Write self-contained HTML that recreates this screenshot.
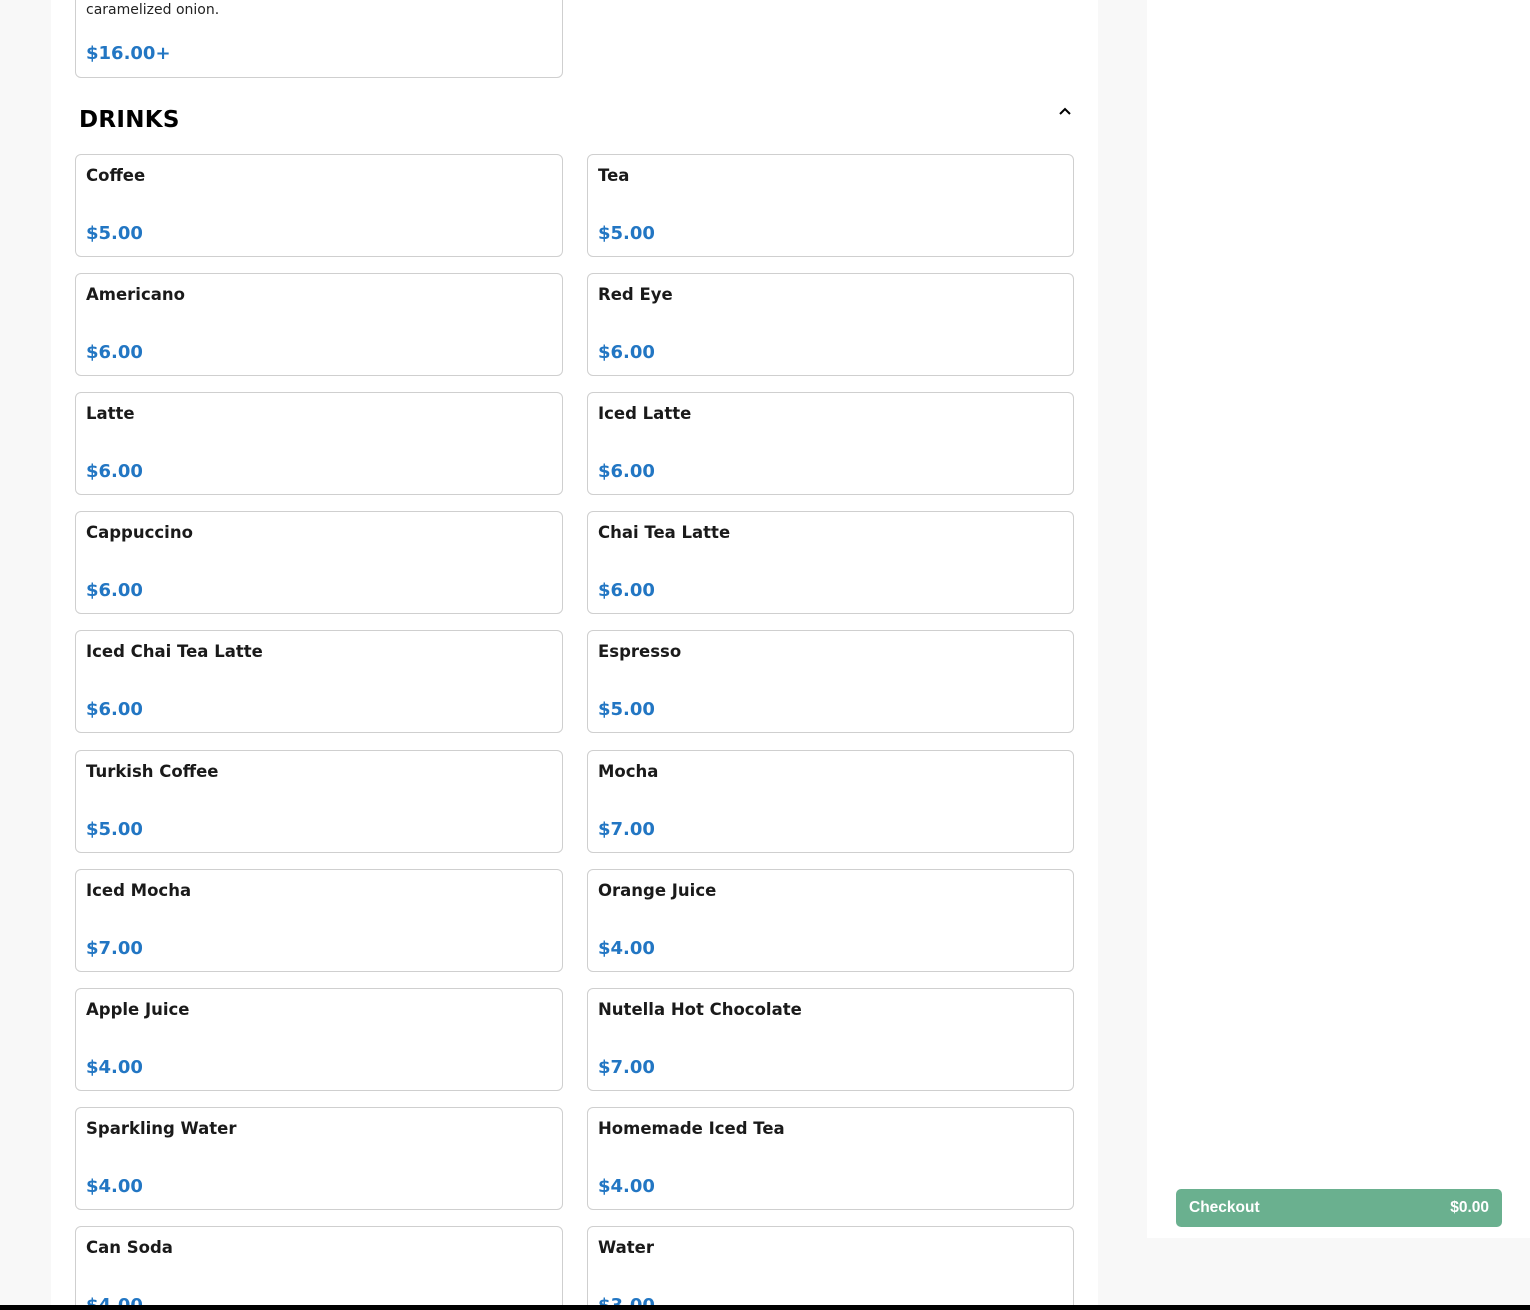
<!DOCTYPE html>
<html><head><meta charset="utf-8"><style>
*{box-sizing:border-box;margin:0;padding:0}
html,body{width:1530px;height:1310px;overflow:hidden}
body{background:#f8f8f8;position:relative;font-family:"DejaVu Sans","Liberation Sans",sans-serif;}
.main{position:absolute;left:51px;top:0;width:1047px;height:1310px;background:#fff}
.side{position:absolute;left:1147px;top:0;width:383px;height:1238px;background:#fff}
.card{position:absolute;width:488px;height:103px;border:1px solid #cfcfcf;border-radius:6px;background:#fff}
.n{position:absolute;left:10px;top:11px;font-size:16.5px;font-weight:bold;color:#1a1a1a;line-height:20px;white-space:nowrap}
.p{position:absolute;left:10px;top:68px;font-size:18px;font-weight:bold;color:#2276c3;line-height:22px}
.h{position:absolute;left:79px;top:107px;font-size:23px;font-weight:bold;color:#000;letter-spacing:.3px}
.btn{position:absolute;left:1176px;top:1189px;width:326px;height:38px;background:#6ab08f;border-radius:5px;color:#fff;font-weight:bold;font-size:15.5px;font-family:"Liberation Sans",sans-serif}
.bar{position:absolute;left:0;top:1305px;width:1530px;height:5px;background:#000}
</style></head><body>
<div class="main"></div><div class="side"></div>
<div class="card" style="left:75px;top:-30px;height:108px">
<div style="position:absolute;left:10px;top:30px;font-size:14px;color:#222;line-height:18px">caramelized onion.</div>
<div class="p" style="top:72px">$16.00+</div></div>
<div class="h">DRINKS</div>
<svg style="position:absolute;left:1058px;top:106px" width="14" height="10" viewBox="0 0 14 10"><path d="M2 8 L7 3 L12 8" fill="none" stroke="#000" stroke-width="2"/></svg>
<div id="g"></div>
<div class="btn"><span style="position:absolute;left:13px;top:10px">Checkout</span><span style="position:absolute;right:13px;top:10px">$0.00</span></div>
<div class="bar"></div>
<script>
var d=[["Coffee","$5.00","Tea","$5.00"],["Americano","$6.00","Red Eye","$6.00"],["Latte","$6.00","Iced Latte","$6.00"],["Cappuccino","$6.00","Chai Tea Latte","$6.00"],["Iced Chai Tea Latte","$6.00","Espresso","$5.00"],["Turkish Coffee","$5.00","Mocha","$7.00"],["Iced Mocha","$7.00","Orange Juice","$4.00"],["Apple Juice","$4.00","Nutella Hot Chocolate","$7.00"],["Sparkling Water","$4.00","Homemade Iced Tea","$4.00"],["Can Soda","$4.00","Water","$3.00"]];
var h="";d.forEach(function(r,i){var t=Math.round(154+i*119.1);
h+='<div class="card" style="left:75px;top:'+t+'px"><div class="n">'+r[0]+'</div><div class="p">'+r[1]+'</div></div>';
h+='<div class="card" style="left:587px;top:'+t+'px;width:487px"><div class="n">'+r[2]+'</div><div class="p">'+r[3]+'</div></div>';});
document.getElementById("g").innerHTML=h;
</script>
</body></html>
